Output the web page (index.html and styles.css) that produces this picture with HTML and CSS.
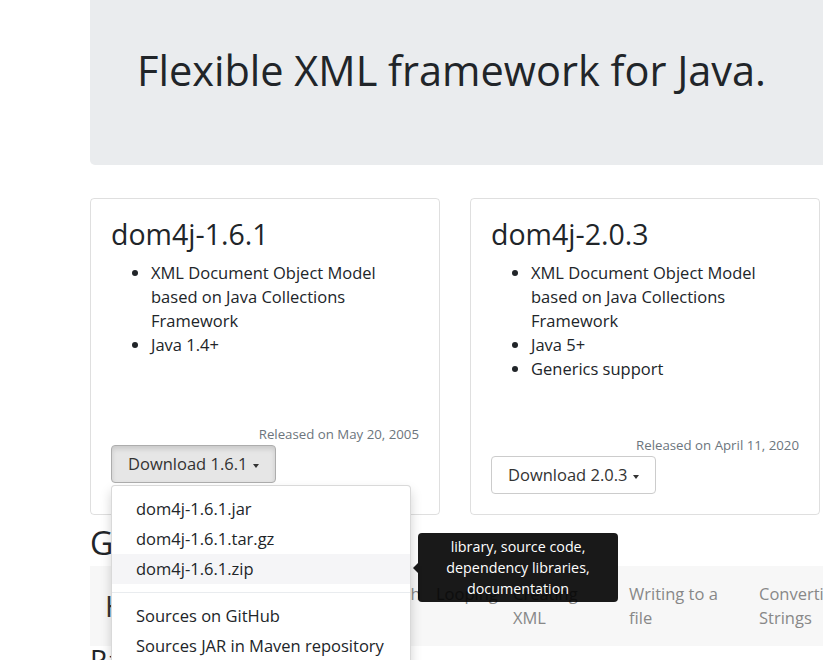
FILE: index.html
```html
<!DOCTYPE html>
<html lang="en">
<head>
<meta charset="utf-8">
<title>dom4j</title>
<link rel="stylesheet" href="styles.css">
</head>
<body>
<div class="container">
  <div class="jumbotron">
    <h1 class="lead-title">Flexible XML framework for Java.</h1>
  </div>

  <div class="release-row">
    <div class="card card-open">
      <h2 class="card-title">dom4j-1.6.1</h2>
      <ul class="features">
        <li>XML Document Object Model based on Java Collections Framework</li>
        <li>Java 1.4+</li>
      </ul>
      <div class="card-foot">
        <div class="released">Released on May 20, 2005</div>
        <div class="dropdown">
          <button class="btn btn-active" type="button">Download 1.6.1<span class="caret"></span></button>
          <div class="dropdown-menu">
            <a class="dropdown-item" href="#">dom4j-1.6.1.jar</a>
            <a class="dropdown-item" href="#">dom4j-1.6.1.tar.gz</a>
            <a class="dropdown-item is-hover" href="#">dom4j-1.6.1.zip</a>
            <div class="dropdown-divider"></div>
            <a class="dropdown-item" href="#">Sources on GitHub</a>
            <a class="dropdown-item" href="#">Sources JAR in Maven repository</a>
            <div class="tooltip">library, source code, dependency libraries, documentation</div>
          </div>
        </div>
      </div>
    </div>

    <div class="card">
      <h2 class="card-title">dom4j-2.0.3</h2>
      <ul class="features">
        <li>XML Document Object Model based on Java Collections Framework</li>
        <li>Java 5+</li>
        <li>Generics support</li>
      </ul>
      <div class="card-foot">
        <div class="released">Released on April 11, 2020</div>
        <div class="dropdown">
          <button class="btn" type="button">Download 2.0.3<span class="caret"></span></button>
        </div>
      </div>
    </div>
  </div>

  <h2 class="section-title">Getting started</h2>
  <div class="tabs">
    <div class="tab tab-home">Home</div>
    <div class="tab tab-xpath">XPath</div>
    <div class="tab tab-loop">Looping</div>
    <div class="tab tab-create">Creating<br>XML</div>
    <div class="tab tab-write">Writing to a<br>file</div>
    <div class="tab tab-convert">Converting<br>Strings</div>
    <div class="tab tab-xslt">Styling with<br>XSLT</div>
  </div>
  <h3 class="sub-title">Parsing</h3>
</div>
</body>
</html>
```

FILE: styles.css
```css
html, body {
  margin: 0;
  padding: 0;
  overflow: hidden;
}
body {
  width: 823px;
  height: 660px;
  font-family: "Open Sans", "Noto Sans", sans-serif;
  font-size: 16.5px;
  line-height: 24px;
  color: #212529;
  background: #fff;
}
.container {
  width: 1110px;
  margin-left: 90px;
}
.jumbotron {
  background: #eaecee;
  height: 165px;
  box-sizing: border-box;
  padding: 46px 0 0 47px;
  border-radius: 0 0 5px 5px;
}
.lead-title {
  margin: 0;
  font-size: 41.5px;
  font-weight: 400;
  line-height: 1.2;
  color: #212529;
}
.release-row {
  display: flex;
  gap: 30px;
  margin-top: 33px;
}
.card {
  width: 350px;
  height: 317px;
  box-sizing: border-box;
  border: 1px solid rgba(0,0,0,.125);
  border-radius: 4px;
  padding: 18px 20px 20px;
  display: flex;
  flex-direction: column;
}
.card-open {
  padding-bottom: 31px;
  position: relative;
  z-index: 2;
}
.card-title {
  margin: 0 0 10px;
  font-size: 28.5px;
  font-weight: 400;
  line-height: 1.2;
}
.features {
  margin: 0;
  padding-left: 40px;
}
.card-foot {
  margin-top: auto;
}
.released {
  text-align: right;
  font-size: 13.25px;
  line-height: 20px;
  color: #6c757d;
  margin-bottom: 1px;
}
.dropdown {
  position: relative;
  display: inline-block;
}
.btn {
  font-family: inherit;
  font-size: 16.5px;
  line-height: 24px;
  color: #333;
  background: #fff;
  border: 1px solid #ccc;
  border-radius: 4px;
  padding: 6px 16px;
  margin: 0;
}
.btn-active {
  background: #e6e6e6;
  border-color: #adadad;
  box-shadow: inset 0 3px 5px rgba(0,0,0,.125);
}
.caret {
  display: inline-block;
  width: 0;
  height: 0;
  margin-left: 6px;
  vertical-align: middle;
  border-top: 4px solid #333;
  border-left: 3.5px solid transparent;
  border-right: 3.5px solid transparent;
}
.dropdown-menu {
  position: absolute;
  left: 0;
  top: calc(100% + 2px);
  width: 300px;
  box-sizing: border-box;
  padding: 8px 0;
  background: #fff;
  border: 1px solid rgba(0,0,0,.15);
  border-radius: 4px;
  box-shadow: 0 6px 12px rgba(0,0,0,.175);
}
.dropdown-item {
  display: block;
  padding: 3px 24px;
  line-height: 24px;
  color: #212529;
  text-decoration: none;
  white-space: nowrap;
}
.dropdown-item.is-hover {
  background: #f5f5f7;
}
.dropdown-divider {
  height: 0;
  margin: 8px 0;
  border-top: 1px solid #e9ecef;
}
.tooltip {
  position: absolute;
  left: 306px;
  top: 47px;
  width: 200px;
  box-sizing: border-box;
  padding: 3px 8px;
  background: rgba(0,0,0,.9);
  color: #fff;
  border-radius: 4px;
  text-align: center;
  font-size: 14.3px;
  line-height: 21px;
}
.tooltip::before {
  content: "";
  position: absolute;
  left: -5px;
  top: 50%;
  margin-top: -5px;
  border-top: 5px solid transparent;
  border-bottom: 5px solid transparent;
  border-right: 5px solid rgba(0,0,0,.9);
}
.section-title {
  margin: 9px 0 4px;
  font-size: 32px;
  font-weight: 400;
  line-height: 1.2;
}
.tabs {
  display: flex;
  align-items: flex-start;
  background: #f7f7f7;
  padding: 16px 0;
}
.tab {
  box-sizing: border-box;
  padding: 0 8px;
  color: #888;
  line-height: 24px;
  flex: none;
}
.tab-home {
  width: 278px;
  padding-left: 15px;
  font-size: 29px;
  line-height: 38px;
  color: #333;
  align-self: center;
}
.tab-xpath { width: 60px; }
.tab-loop { width: 77px; }
.tab-create { width: 116px; }
.tab-write { width: 130px; }
.tab-convert { width: 130px; }
.tab-xslt { width: 130px; }
.sub-title {
  margin: 1px 0 0;
  font-size: 28px;
  font-weight: 400;
  line-height: 24px;
}
```
